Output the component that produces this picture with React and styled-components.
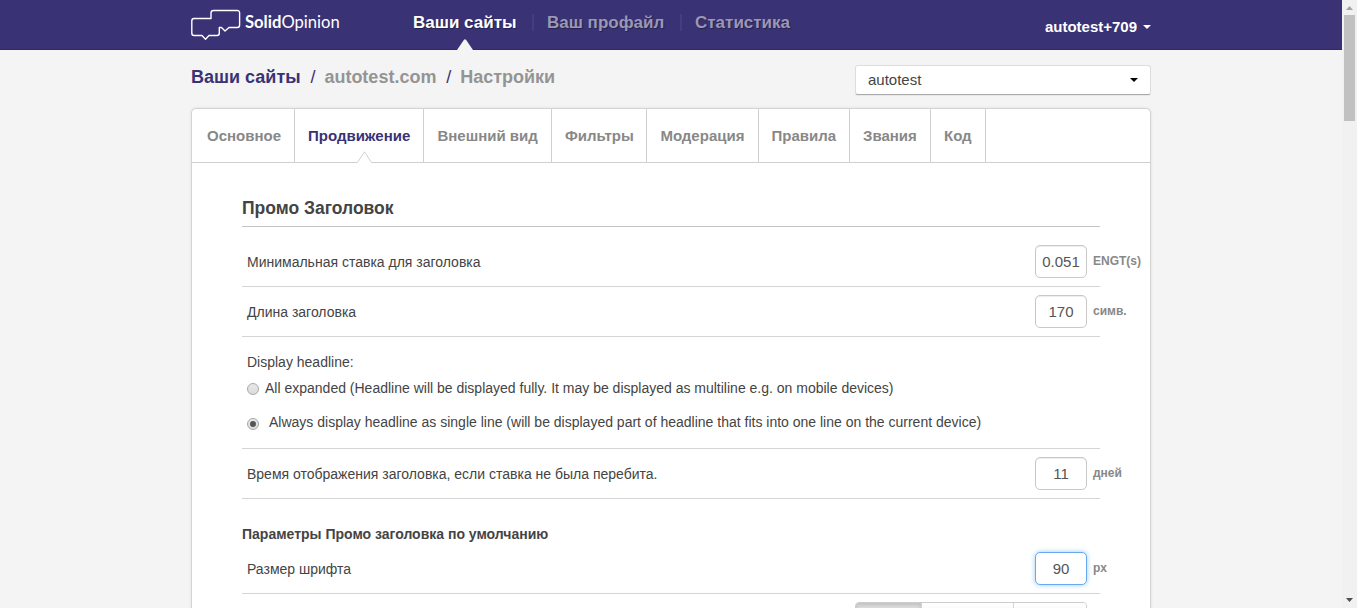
import React from 'react';
import styled, { createGlobalStyle, css } from 'styled-components';

const Global = createGlobalStyle`
  *, *::before, *::after { box-sizing: border-box; }
  html, body { margin: 0; height: 608px; overflow: hidden; background: #f4f4f4; }
  body { font: 14px/20px "Liberation Sans", Arial, sans-serif; color: #444; }
`;

const Viewport = styled.div`
  display: flex;
  width: 1357px;
  height: 608px;
  overflow: hidden;
`;

const Page = styled.div`
  width: 1342px;
  height: 608px;
  overflow: hidden;
`;

const Container = styled.div`
  width: 960px;
  margin: 0 auto;
`;

const Header = styled.header`
  height: 50px;
  background: #393275;
  border-bottom: 1px solid #302a68;
`;

const HeaderInner = styled(Container)`
  display: flex;
  height: 50px;
`;

const Brand = styled.a`
  display: flex;
  width: 208px;
  padding-top: 9px;
  color: #fff;
`;

const BrandName = styled.span`
  margin-left: 4px;
  font: 400 16.6px/26px Lato, sans-serif;
  white-space: nowrap;
  b { font-weight: 700; }
`;

const Nav = styled.nav`
  display: flex;
  height: 50px;
`;

const NavItem = styled.a`
  position: relative;
  width: ${(p) => p.$width}px;
  padding: 13px 0 0 14px;
  font: 700 17px/20px "Liberation Sans", Arial, sans-serif;
  white-space: nowrap;
  color: ${(p) => (p.$active ? '#fff' : '#9b97b6')};
  text-shadow: 1px 1px 1px rgba(0, 0, 0, 0.35);
  &:not(:first-child)::before {
    content: '';
    position: absolute;
    left: -1px;
    top: 14px;
    width: 2px;
    height: 17px;
    background: #423e80;
  }
`;

const NavPointer = styled.svg`
  position: absolute;
  left: 58px;
  top: 39px;
`;

const User = styled.div`
  display: flex;
  align-items: center;
  height: 20px;
  margin: 17px 0 0 auto;
  font-weight: 700;
  font-size: 15px;
  color: #fff;
`;

const Caret = styled.i`
  margin-left: ${(p) => p.$gap || 0}px;
  border: 4px solid transparent;
  border-top-color: currentColor;
  border-bottom: 0;
`;

const SubHeader = styled(Container)`
  display: flex;
  justify-content: space-between;
  height: 58px;
  padding-top: 15px;
`;

const Crumbs = styled.div`
  display: flex;
  font: 700 18px/24px "Liberation Sans", Arial, sans-serif;
  color: #949494;
`;

const Crumb = styled.span`
  color: ${(p) => (p.$strong ? '#393275' : '#949494')};
`;

const Slash = styled.span`
  width: 23.8px;
  padding-left: 1px;
  text-align: center;
  font-weight: 400;
  color: #393275;
`;

const SiteSelect = styled.div`
  display: flex;
  align-items: center;
  justify-content: space-between;
  width: 296px;
  height: 30px;
  padding: 0 12px;
  border: 1px solid #ddd;
  border-bottom-color: #aaa;
  border-radius: 3px;
  background: #fff;
  font-size: 15px;
  color: #444;
  box-shadow: 0 1px 1px rgba(0, 0, 0, 0.06);
  ${Caret} { color: #000; }
`;

const Panel = styled(Container)`
  height: 520px;
  border: 1px solid #d4d4d4;
  border-radius: 5px;
  background: #fff;
  box-shadow: 0 0 3px rgba(0, 0, 0, 0.1);
`;

const Tabs = styled.div`
  display: flex;
  height: 54px;
  border-bottom: 1px solid #d0d0d0;
`;

const Tab = styled.a`
  position: relative;
  width: ${(p) => p.$width}px;
  height: 53px;
  padding-left: ${(p) => p.$pad || 13}px;
  border-right: 1px solid #d0d0d0;
  font: 700 15px/54px "Liberation Sans", Arial, sans-serif;
  white-space: nowrap;
  color: ${(p) => (p.$active ? '#393275' : '#888')};
`;

const TabPointer = styled.svg`
  position: absolute;
  left: 62px;
  top: 42px;
`;

const Form = styled.div`
  width: 858px;
  margin-left: 50px;
  padding-top: 32px;
`;

const Title = styled.h2`
  height: 32px;
  margin: 0 0 10px;
  border-bottom: 1px solid #c4c4c4;
  font: 700 17.5px/26px "Liberation Sans", Arial, sans-serif;
  color: #444;
`;

const SubTitle = styled.h3`
  margin: 25px 0 0;
  font: 700 14px/20px "Liberation Sans", Arial, sans-serif;
  color: #444;
`;

const Row = styled.div`
  display: flex;
  align-items: center;
  justify-content: space-between;
  height: 50px;
  padding-left: 5px;
  border-bottom: 1px solid #d4d4d4;
`;

const Field = styled.div`
  display: flex;
  width: 65px;
`;

const Value = styled.input`
  flex: 0 0 52px;
  width: 52px;
  height: 33px;
  padding: 0 0 1px;
  border: 1px solid #c8c8c8;
  border-radius: 5px;
  background: #fff;
  box-shadow: inset 0 1px 1px rgba(0, 0, 0, 0.075);
  outline: 0;
  text-align: center;
  font: 15px "Liberation Sans", Arial, sans-serif;
  color: #555;
  ${(p) => p.$focused && css`
    border-color: #66a9f0;
    box-shadow: 0 0 5px rgba(82, 168, 236, 0.6);
  `}
`;

const Unit = styled.span`
  margin-left: 6px;
  padding-top: 6px;
  font: 700 12px/20px "Liberation Sans", Arial, sans-serif;
  white-space: nowrap;
  color: #888;
`;

const Choices = styled.div`
  height: 112px;
  padding: 15px 0 0 5px;
  border-bottom: 1px solid #d4d4d4;
`;

const Choice = styled.label`
  display: flex;
  height: 20px;
  margin-top: ${(p) => p.$top}px;
`;

const Radio = styled.span`
  display: flex;
  align-items: center;
  justify-content: center;
  width: 12px;
  height: 12px;
  margin: ${(p) => p.$top}px ${(p) => p.$gap}px 0 0;
  border: 1px solid #a8a8a8;
  border-radius: 50%;
  background: linear-gradient(#e8e8e8, #dcdcdc);
  &::after {
    content: '';
    display: ${(p) => (p.$checked ? 'block' : 'none')};
    width: 6px;
    height: 6px;
    border-radius: 50%;
    background: #555;
  }
`;

const ButtonGroup = styled.div`
  display: flex;
  width: 232px;
  height: 30px;
  margin: 8px 13px 0 auto;
  border: 1px solid #ccc;
  border-radius: 4px;
  overflow: hidden;
`;

const Segment = styled.span`
  width: ${(p) => p.$width}px;
  background: ${(p) => (p.$pressed ? '#dedede' : 'linear-gradient(#fff, #e8e8e8)')};
  box-shadow: ${(p) => (p.$pressed ? 'inset 0 2px 4px rgba(0, 0, 0, 0.15)' : 'none')};
  &:not(:first-child) { border-left: 1px solid #d4d4d4; }
`;

const Scrollbar = styled.div`
  display: flex;
  flex-direction: column;
  align-items: center;
  justify-content: space-between;
  width: 15px;
  height: 608px;
  background: #f1f1f1;
`;

const Thumb = styled.div`
  width: 11px;
  height: 106px;
  margin: 0 0 auto;
  background: #c1c1c1;
`;

const ArrowBox = styled.svg`
  display: block;
  flex: none;
`;

const tabs = [
  { name: 'Основное', width: 103, pad: 15 },
  { name: 'Продвижение', width: 129, active: true },
  { name: 'Внешний вид', width: 128, pad: 13.4 },
  { name: 'Фильтры', width: 95 },
  { name: 'Модерация', width: 112, pad: 13.4 },
  { name: 'Правила', width: 91, pad: 12.5 },
  { name: 'Звания', width: 81 },
  { name: 'Код', width: 55 },
];

function NumberRow({ label, value, unit, focused }) {
  return (
    <Row>
      <span>{label}</span>
      <Field>
        <Value defaultValue={value} $focused={focused} />
        <Unit>{unit}</Unit>
      </Field>
    </Row>
  );
}

export default function App() {
  return (
    <Viewport>
      <Global />
      <Page>
        <Header>
          <HeaderInner>
            <Brand>
              <svg width="50" height="32" viewBox="0 0 50 32" fill="none" stroke="#fff" strokeWidth="1.4" strokeLinejoin="round">
                <path d="M20 9.5H3Q.8 9.5.8 12V24Q.8 26.5 3 26.5H11L14.5 30.2L18 26.5H26Q28.3 26.5 28.3 24V18.5H30.5L34 22L38 18.5H46.3Q48.6 18.5 48.6 16V4Q48.6 1.5 46.3 1.5H22.5Q20 1.5 20 4Z" />
              </svg>
              <BrandName><b>Solid</b>Opinion</BrandName>
            </Brand>
            <Nav>
              <NavItem $active $width={134}>
                Ваши сайты
                <NavPointer width="16" height="11"><path d="M0 11L7 .8Q8 -.4 9 .8L16 11Z" fill="#f4f4f4" /></NavPointer>
              </NavItem>
              <NavItem $width={148}>Ваш профайл</NavItem>
              <NavItem $width={120}>Статистика</NavItem>
            </Nav>
            <User>autotest+709<Caret $gap={6} /></User>
          </HeaderInner>
        </Header>
        <SubHeader>
          <Crumbs>
            <Crumb $strong>Ваши сайты</Crumb>
            <Slash>/</Slash>
            <Crumb>autotest.com</Crumb>
            <Slash>/</Slash>
            <Crumb>Настройки</Crumb>
          </Crumbs>
          <SiteSelect>autotest<Caret /></SiteSelect>
        </SubHeader>
        <Panel>
          <Tabs>
            {tabs.map((t) => (
              <Tab key={t.name} $width={t.width} $pad={t.pad} $active={t.active}>
                {t.name}
                {t.active && (
                  <TabPointer width="15" height="12">
                    <path d="M0 12L.5 11.5L7.5 .8L14.5 11.5L15 12Z" fill="#fff" />
                    <path d="M.5 11.5L7.5 .8L14.5 11.5" fill="none" stroke="#d0d0d0" />
                  </TabPointer>
                )}
              </Tab>
            ))}
          </Tabs>
          <Form>
            <Title>Промо Заголовок</Title>
            <NumberRow label="Минимальная ставка для заголовка" value="0.051" unit="ENGT(s)" />
            <NumberRow label="Длина заголовка" value="170" unit="симв." />
            <Choices>
              <div>Display headline:</div>
              <Choice $top={6}>
                <Radio $top={5} $gap={6} />
                All expanded (Headline will be displayed fully. It may be displayed as multiline e.g. on mobile devices)
              </Choice>
              <Choice $top={14}>
                <Radio $top={6} $gap={10} $checked />
                Always display headline as single line (will be displayed part of headline that fits into one line on the current device)
              </Choice>
            </Choices>
            <NumberRow label="Время отображения заголовка, если ставка не была перебита." value="11" unit="дней" />
            <SubTitle>Параметры Промо заголовка по умолчанию</SubTitle>
            <NumberRow label="Размер шрифта" value="90" unit="px" focused />
            <ButtonGroup>
              <Segment $width={65} $pressed />
              <Segment $width={92} />
              <Segment $width={73} />
            </ButtonGroup>
          </Form>
        </Panel>
      </Page>
      <Scrollbar>
        <ArrowBox width="15" height="15"><path d="M4 10L7.5 6L11 10Z" fill="#a3a3a3" /></ArrowBox>
        <Thumb />
        <ArrowBox width="15" height="15"><path d="M4 5L7.5 9L11 5Z" fill="#505050" /></ArrowBox>
      </Scrollbar>
    </Viewport>
  );
}
